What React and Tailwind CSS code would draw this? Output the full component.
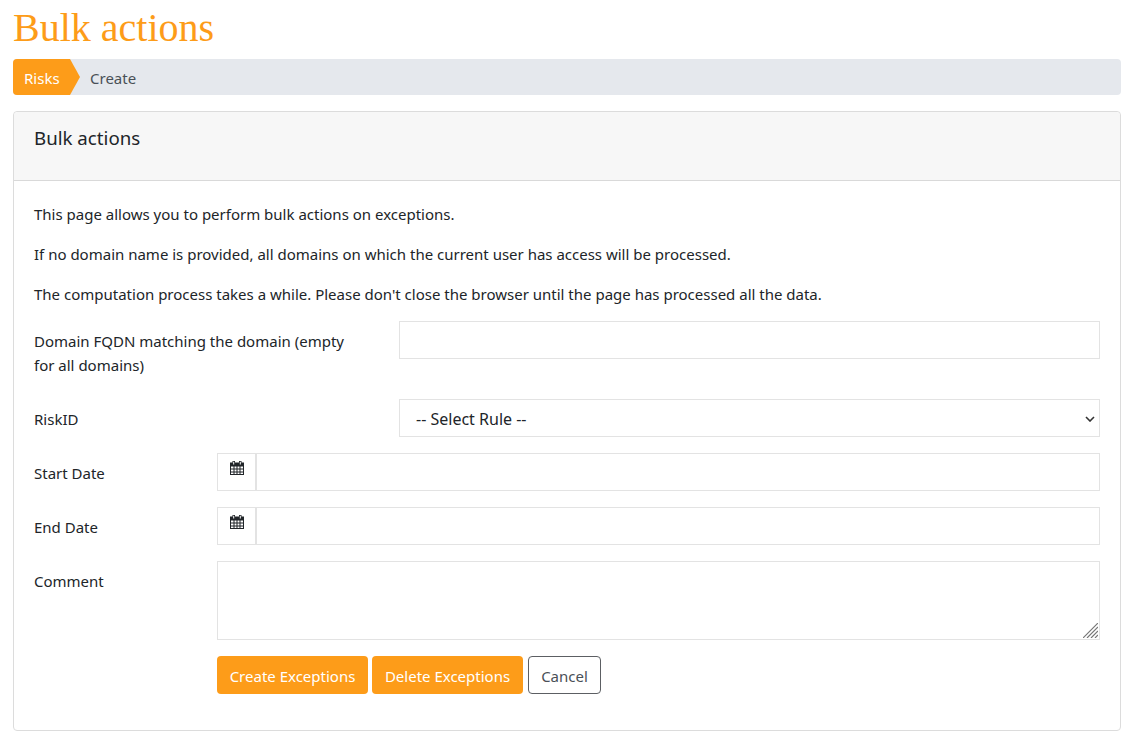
const font = "font-['Noto_Sans',sans-serif]";

function CalendarIcon() {
  return (
    <svg width="14" height="14" viewBox="0 0 14 14" className="text-[#212529]">
      <path fill="currentColor" d="M0 1.500h2.500V0h2.500v1.500h4V0h2.500v1.500H14V14H0z" />
      <path
        fill="#fff"
        d="M1 5.500h2.500V7.500H1zM4.500 5.500h2V7.500h-2zM7.500 5.500h2V7.500h-2zM10.500 5.500H13V7.500h-2.500zM1 8.500h2.500v2H1zM4.500 8.500h2v2h-2zM7.500 8.500h2v2h-2zM10.500 8.500H13v2h-2.500zM1 11.500h2.500V13H1zM4.500 11.500h2V13h-2zM7.500 11.500h2V13h-2zM10.500 11.500H13V13h-2.500z"
      />
      <path fill="#fff" d="M3.200 .800h1v2.700h-1zM9.800 .800h1v2.700h-1z" />
    </svg>
  );
}

function DateRow({ label }) {
  return (
    <div className="flex mb-4">
      <label className="w-[183px] pt-2 leading-6">{label}</label>
      <div className="flex flex-1">
        <span className="w-[39px] h-[38px] border border-[#e3e3e3] flex justify-center pt-[7px]">
          <CalendarIcon />
        </span>
        <input className="flex-1 h-[38px] border border-[#e3e3e3] outline-none" />
      </div>
    </div>
  );
}

export default function App() {
  return (
    <div className={`bg-white pl-[13px] pr-2 text-[15px] leading-6 text-[#212529] ${font}`}>
      <h1 className="font-['Liberation_Serif',serif] text-[40px] leading-[48px] pt-1 mb-[7px] text-[#fd9c19]">
        Bulk actions
      </h1>

      {/* breadcrumb */}
      <div className="flex items-center h-9 rounded bg-[#e5e8ed] mb-4 overflow-hidden">
        <div className="h-9 flex items-center pl-[11px] bg-[#fd9c19] text-white w-[57px] relative pt-[2px]">
          Risks
          <span className="absolute left-full top-0 border-y-[18px] border-y-transparent border-l-[10px] border-l-[#fd9c19]" />
        </div>
        <span className="ml-[20px] pt-[2px] text-[#495057]">Create</span>
      </div>

      {/* card */}
      <div className="border border-[#dcdcdc] rounded">
        <div className="h-[69px] bg-[#f7f7f7] border-b border-[#d9d9d9] px-5 pt-[14px] text-[18.7px] rounded-t">
          Bulk actions
        </div>
        <div className="px-5 pt-[21px] pb-9">
          <p className="mb-4">This page allows you to perform bulk actions on exceptions.</p>
          <p className="mb-4">If no domain name is provided, all domains on which the current user has access will be processed.</p>
          <p className="mb-[14px]">The computation process takes a while. Please don't close the browser until the page has processed all the data.</p>

          <div className="flex mb-[14px] pt-px">
            <label className="w-[365px] pt-2 pb-2 pr-10">Domain FQDN matching the domain (empty for all domains)</label>
            <input className="flex-1 h-[38px] border border-[#e3e3e3] outline-none" />
          </div>

          <div className="flex mb-4">
            <label className="w-[365px] pt-2">RiskID</label>
            <div className="flex-1 relative">
              <select className="appearance-none w-full h-[38px] border border-[#e3e3e3] pl-4 pr-8 pt-px text-base bg-white outline-none">
                <option>-- Select Rule --</option>
              </select>
              <svg
                width="10"
                height="6"
                viewBox="0 0 10 6"
                fill="none"
                stroke="#333"
                strokeWidth="1.6"
                className="absolute right-[5px] top-[17px] pointer-events-none"
              >
                <path d="M1 1l4 4 4-4" />
              </svg>
            </div>
          </div>

          <DateRow label="Start Date" />
          <DateRow label="End Date" />

          <div className="flex mb-4">
            <label className="w-[183px] pt-2">Comment</label>
            <div className="flex-1 relative">
              <textarea className="w-full h-[79px] border border-[#e3e3e3] outline-none block resize-none" />
              <svg
                width="15"
                height="15"
                viewBox="0 0 15 15"
                stroke="#777"
                strokeWidth="1.2"
                className="absolute right-[2px] bottom-[2px] pointer-events-none"
              >
                <path d="M0 15L15 0M4 15L15 4M8 15l7-7M12 15l3-3" />
              </svg>
            </div>
          </div>

          <div className="flex ml-[183px]">
            <button className="w-[151px] h-[38px] pt-px rounded bg-[#fd9c19] text-white">Create Exceptions</button>
            <button className="w-[151px] h-[38px] pt-px rounded bg-[#fd9c19] text-white ml-1">Delete Exceptions</button>
            <button className="w-[73px] h-[38px] pt-px rounded border border-[#5c5f63] text-[#495057] ml-[5px]">Cancel</button>
          </div>
        </div>
      </div>
    </div>
  );
}
